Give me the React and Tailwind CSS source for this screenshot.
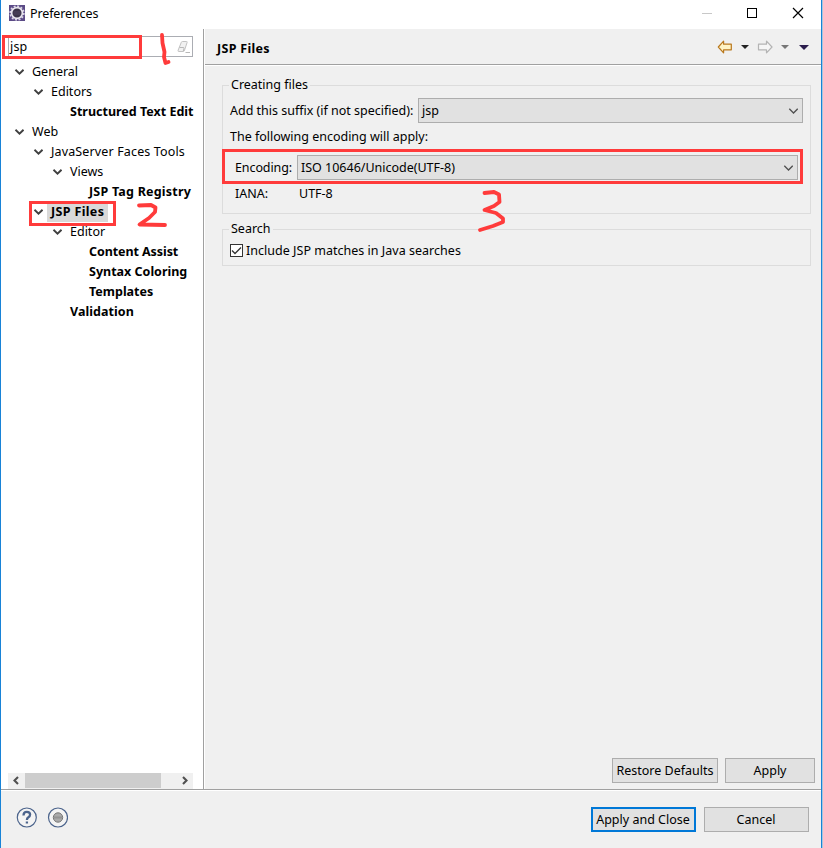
import React from 'react';

const TREE = [
	{ label: 'General', depth: 0, open: true },
	{ label: 'Editors', depth: 1, open: true },
	{ label: 'Structured Text Edit', depth: 2, bold: true },
	{ label: 'Web', depth: 0, open: true },
	{ label: 'JavaServer Faces Tools', depth: 1, open: true, tracking: 'tracking-[0.14px]' },
	{ label: 'Views', depth: 2, open: true },
	{ label: 'JSP Tag Registry', depth: 3, bold: true, tracking: 'tracking-[0.22px]' },
	{ label: 'JSP Files', depth: 1, open: true, bold: true, selected: true, tracking: 'tracking-[0.35px]' },
	{ label: 'Editor', depth: 2, open: true },
	{ label: 'Content Assist', depth: 3, bold: true, tracking: 'tracking-[-0.08px]' },
	{ label: 'Syntax Coloring', depth: 3, bold: true },
	{ label: 'Templates', depth: 3, bold: true },
	{ label: 'Validation', depth: 2, bold: true, tracking: 'tracking-[0.06px]' },
];

const INDENT = ['pl-[12px]', 'pl-[31px]', 'pl-[50px]', 'pl-[69px]'];

function Chevron({ className }) {
	return (
		<svg width="10" height="6" viewBox="0 0 10 6" fill="none" className={className}>
			<path d="M1.5 0.8 L5.5 4.6 L9.5 0.8" stroke="currentColor" strokeWidth="1.9" />
		</svg>
	);
}

function TreeRow({ item }) {
	return (
		<div className={`flex h-5 items-center whitespace-nowrap ${INDENT[item.depth]}`}>
			<span className="flex w-[15px] shrink-0">{item.open && <Chevron className="ml-px text-[#404040]" />}</span>
			<span
				className={`flex h-[19px] items-center pl-[4px] ${item.bold ? 'font-bold' : ''} ${
					item.selected ? 'w-[61px] bg-[#d9d9d9]' : ''
				} ${item.tracking ?? ''}`}
			>
				{item.label}
			</span>
		</div>
	);
}

function Combo({ value, className }) {
	return (
		<div className={`flex h-[25px] items-center justify-between border border-[#adadad] bg-[#e1e1e1] pr-1 pl-[3px] ${className}`}>
			<span>{value}</span>
			<svg width="10" height="6" viewBox="0 0 10 6" fill="none">
				<path d="M1.3 0.8 L5.5 5 L9.7 0.8" stroke="#505050" strokeWidth="1.3" />
			</svg>
		</div>
	);
}

function Button({ children, className }) {
	return (
		<button type="button" className={`flex h-[25px] items-center justify-center whitespace-nowrap bg-[#e1e1e1] ${className}`}>
			{children}
		</button>
	);
}

function TitleBar() {
	return (
		<div className="flex h-[29px] items-center bg-white">
			<svg width="16" height="16" viewBox="0 0 16 16" className="ml-2 -mt-[3px]">
				<rect width="16" height="16" fill="#5b4a86" />
				<circle cx="8" cy="8" r="6.9" fill="none" stroke="#dcd8e6" strokeWidth="1.6" strokeDasharray="2 1.61" />
				<circle cx="8" cy="8" r="5.4" fill="#3a3348" stroke="#e8e5ee" strokeWidth="1.7" />
				<path d="M4.6 7h6.8M4.6 9h6.8" stroke="#554c68" strokeWidth="0.8" />
			</svg>
			<span className="ml-[5px] -mt-0.5 tracking-[-0.12px]">Preferences</span>
			<svg width="104" height="12" viewBox="0 0 104 12" fill="none" className="mr-4 -mt-[3px] ml-auto">
				<path d="M1 6.5h10" stroke="#c8c8c8" />
				<rect x="46.5" y="1.5" width="9" height="9" stroke="#000" />
				<path d="M92 1l10 10M102 1l-10 10" stroke="#000" strokeWidth="1.2" />
			</svg>
		</div>
	);
}

function Sidebar() {
	return (
		<div className="flex w-[202px] shrink-0 flex-col bg-white">
			<div className="mt-[7px] ml-[7px] flex h-[21px] w-[185px] items-center border border-[#abadb3] pr-[2px] pl-px">
				<span className="tracking-[0.2px]">jsp</span>
				<svg width="15" height="14" viewBox="0 0 15 14" fill="none" className="ml-auto">
					<path d="M7.5 1.5h4q1 0 0.6 1L9.6 10q-0.4 1.500-1.400 1.500H4q-1.300 0-0.900-1.200L6.300 2.300q0.300-0.800 1.200-0.800z" fill="#f1f1f1" stroke="#c2c2c2" />
					<path d="M4.500 7.500h3.500q1.300 0 1 1L8.300 11M10.500 12.500h4.500" stroke="#b8b8b8" />
				</svg>
			</div>
			<div className="mt-[5px]">
				{TREE.map((item) => (
					<TreeRow key={item.label} item={item} />
				))}
			</div>
			<div className="mt-auto ml-[7px] flex h-4 w-[185px] bg-[#f0f0f0]">
				<svg width="17" height="15" viewBox="0 0 17 15" fill="none">
					<path d="M10 4L6.500 7.500L10 11" stroke="#505050" strokeWidth="2.100" />
				</svg>
				<div className="h-[15px] w-[136px] bg-[#cdcdcd]" />
				<svg width="17" height="15" viewBox="0 0 17 15" fill="none" className="ml-auto">
					<path d="M7 4L10.500 7.500L7 11" stroke="#505050" strokeWidth="2.100" />
				</svg>
			</div>
		</div>
	);
}

function PageHeader() {
	return (
		<div className="flex h-[37px] shrink-0 items-center border-b border-white pl-3 shadow-[inset_0_-1px_0_#a0a0a0]">
			<span className="mt-[3px] font-bold tracking-[0.3px]">JSP Files</span>
			<svg width="96" height="14" viewBox="0 0 96 14" className="mr-2 ml-auto">
				<path d="M1.3 7L6.600 1.200V4.200H14.300V9.800H6.600V12.800z" fill="#fff3c4" stroke="#b9781d" strokeWidth="1.200" strokeLinejoin="round" />
				<path d="M24 5h8l-4 4z" fill="#222" />
				<path d="M55 7L49.500 1.200V4.200H41.500V9.800H49.500V12.800z" fill="#f6f6f6" stroke="#b4b4b4" strokeWidth="1.200" strokeLinejoin="round" />
				<path d="M64 5h8l-4 4z" fill="#777" />
				<path d="M82 5h10l-5 5z" fill="#2b1d4d" />
			</svg>
		</div>
	);
}

function Group({ title, className, children }) {
	return (
		<fieldset className={`ml-[17px] w-[589px] border border-[#dcdcdc] ${className}`}>
			<legend className="ml-[6px] h-[18px] px-[2px] leading-[18px]">{title}</legend>
			{children}
		</fieldset>
	);
}

function PreferencePage() {
	return (
		<div className="flex grow flex-col border-l border-white bg-[#f0f0f0]">
			<PageHeader />
			<Group title="Creating files" className="mt-[10px] h-[138px] tracking-[-0.01px]">
				<div className="mt-[4px] flex items-center pl-[7px]">
					<span className="w-[188px]">Add this suffix (if not specified):</span>
					<Combo value="jsp" className="w-[385px]" />
				</div>
				<div className="mt-[4px] flex h-[20px] items-center pl-[7px]">The following encoding will apply:</div>
				<div className="mt-[8px] flex items-center pl-3">
					<span className="w-[62px] tracking-[-0.1px]">Encoding:</span>
					<Combo value="ISO 10646/Unicode(UTF-8)" className="w-[501px]" />
				</div>
				<div className="mt-[4px] flex h-[20px] items-center pl-3">
					<span className="w-[64px]">IANA:</span>
					<span>UTF-8</span>
				</div>
			</Group>
			<Group title="Search" className="mt-[6px] h-[46px]">
				<label className="mt-[2px] flex h-5 items-center pl-[7px] tracking-[0.02px]">
					<svg width="13" height="13" viewBox="0 0 13 13" fill="none" className="mr-[3px]">
						<rect x="0.5" y="0.5" width="12" height="12" fill="#fff" stroke="#333" />
						<path d="M2 6.5L5 9.5L11 3.5" stroke="#333" strokeWidth="1.3" />
					</svg>
					<span className="mt-px">Include JSP matches in Java searches</span>
				</label>
			</Group>
			<div className="mt-auto mr-[6px] mb-[6px] flex justify-end gap-[7px]">
				<Button className="w-[106px] border border-[#adadad]">Restore Defaults</Button>
				<Button className="w-[90px] border border-[#adadad]">Apply</Button>
			</div>
		</div>
	);
}

function Footer() {
	return (
		<div className="flex h-[59px] shrink-0 items-center border-t border-[#a0a0a0] bg-[#f0f0f0] pr-3 pl-[15px] shadow-[inset_0_1px_0_#fff]">
			<svg width="52" height="22" viewBox="0 0 52 22" fill="none" className="-mt-[2px]">
				<circle cx="10.800" cy="10.500" r="9.500" fill="#f4f4f4" stroke="#4c648c" strokeWidth="1.200" />
				<path d="M7.500 8.400q0-3.600 3.300-3.600t3.300 2.800q0 1.600-1.700 2.700q-1.500 1-1.500 2.700M10.900 14.400v2.200" stroke="#4c648c" strokeWidth="2.300" />
				<circle cx="42" cy="10.500" r="9.500" fill="#f4f4f4" stroke="#4c648c" strokeWidth="1.200" />
				<circle cx="42" cy="10.500" r="4.700" fill="#aaa" stroke="#777" />
				<path d="M38 10.500h8" stroke="#939393" strokeWidth="2" />
			</svg>
			<Button className="ml-auto w-[105px] border-2 border-[#0078d7] pt-[2px] pr-px">Apply and Close</Button>
			<Button className="ml-2 w-[105px] border border-[#adadad] pt-[2px] pr-px">Cancel</Button>
		</div>
	);
}

// red pen marks that sit on top of the dialog
function Annotations() {
	return (
		<svg width="823" height="848" viewBox="0 0 823 848" fill="none" className="pointer-events-none absolute inset-0">
			<g stroke="#ff3b3b" strokeWidth="3">
				<rect x="3.5" y="36.5" width="137" height="21" />
				<rect x="30.5" y="202.5" width="84" height="22" />
				<rect x="223.5" y="150.5" width="578" height="32" />
				<g strokeLinecap="round" strokeLinejoin="round" strokeWidth="3.8">
					<path d="M162 35L162.500 43L164.500 52L164 57L165.500 63L168.500 62" />
					<path d="M139 205.500L151 205L155.500 207.500L155 212L149 218L139.500 224.500L165 225" />
					<path d="M484.500 193L494 192L499 194.500L499.500 202L494 206L484.500 210L496 213L503 218.500L503 222L493 226L480 230" />
				</g>
			</g>
		</svg>
	);
}

export default function App() {
	return (
		<div className="relative flex h-[848px] w-[823px] flex-col overflow-hidden border-r border-r-[#a9c6dc] font-['Noto_Sans','Noto_Sans_CJK_SC',sans-serif] text-[12.5px] leading-[18px] text-black">
			<div className="flex grow flex-col border-x border-[#1883d7]">
				<TitleBar />
				<div className="flex grow">
					<Sidebar />
					<div className="w-px shrink-0 bg-[#a0a0a0]" />
					<PreferencePage />
				</div>
				<Footer />
			</div>
			<Annotations />
		</div>
	);
}
